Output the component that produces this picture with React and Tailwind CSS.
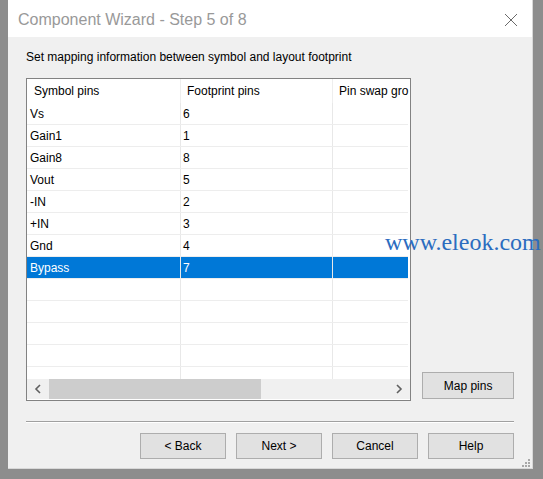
import React from "react";

const pins = [
  ["Vs", "6"],
  ["Gain1", "1"],
  ["Gain8", "8"],
  ["Vout", "5"],
  ["-IN", "2"],
  ["+IN", "3"],
  ["Gnd", "4"],
  ["Bypass", "7"],
  ["", ""],
  ["", ""],
  ["", ""],
  ["", ""],
  ["", ""],
];

function WizardButton({ children, className = "" }) {
  return (
    <button
      type="button"
      className={`h-[26px] bg-[#e1e1e1] border border-[#adadad] text-[12px] text-black ${className}`}
    >
      {children}
    </button>
  );
}

export default function App() {
  return (
    <div
      className="relative w-[543px] h-[479px] bg-[#8d8d8d] pl-[8px] pr-[10px] pb-[10px] overflow-hidden"
      style={{ fontFamily: '"Liberation Sans", Arial, sans-serif' }}
    >
      <div className="h-full flex flex-col bg-[#f0f0f0] border-r border-b border-[#d8d8d8]">
        {/* Title bar */}
        <div className="h-[37px] bg-white flex items-center justify-between pl-[10px] pr-[14px] shrink-0">
          <span className="text-[16px] text-[#999999] pt-[2px]">Component Wizard - Step 5 of 8</span>
          <svg width="14" height="14" viewBox="0 0 14 14" className="mt-[2px]">
            <path d="M1 1 L13 13 M13 1 L1 13" stroke="#6a6a6a" strokeWidth="1" fill="none" />
          </svg>
        </div>

        {/* Body */}
        <div className="flex-1 flex flex-col pl-[18px] pr-[18px]">
          <p className="text-[12px] text-black mt-[13px] leading-[14px]">
            Set mapping information between symbol and layout footprint
          </p>

          <div className="flex items-end gap-[11px] mt-[14px]">
            {/* Pin grid */}
            <div className="w-[386px] h-[323px] border border-[#828282] bg-white flex flex-col">
              <div className="flex-1 overflow-hidden">
                <div className="flex h-[24px] text-[12px] text-black">
                  <div className="w-[154px] pl-[7px] flex items-center border-r border-[#eeeeee]">Symbol pins</div>
                  <div className="w-[152px] pl-[6px] flex items-center border-r border-[#eeeeee]">Footprint pins</div>
                  <div className="flex-1 pl-[6px] flex items-center whitespace-nowrap overflow-hidden">Pin swap gro</div>
                </div>
                {pins.map(([sym, fp], i) => {
                  const selected = sym === "Bypass";
                  return (
                    <div
                      key={i}
                      className={`flex h-[22px] text-[12px] mr-[2px] border-b border-[#ededed] ${
                        selected ? "bg-[#0078d7] text-white" : "text-black"
                      }`}
                    >
                      <div className="w-[154px] pl-[3px] flex items-center border-r border-[#e8e8e8]">{sym}</div>
                      <div className="w-[152px] pl-[2px] flex items-center border-r border-[#e8e8e8]">{fp}</div>
                      <div className="flex-1" />
                    </div>
                  );
                })}
              </div>
              {/* Horizontal scrollbar */}
              <div className="h-[20px] mb-[1px] flex items-center bg-[#f0f0f0] shrink-0">
                <div className="w-[22px] h-full flex items-center justify-center">
                  <svg width="8" height="10" viewBox="0 0 8 10">
                    <path d="M6 1 L2 5 L6 9" stroke="#606060" strokeWidth="1.6" fill="none" />
                  </svg>
                </div>
                <div className="w-[212px] h-full bg-[#cdcdcd]" />
                <div className="flex-1" />
                <div className="w-[22px] h-full flex items-center justify-center">
                  <svg width="8" height="10" viewBox="0 0 8 10">
                    <path d="M2 1 L6 5 L2 9" stroke="#606060" strokeWidth="1.6" fill="none" />
                  </svg>
                </div>
              </div>
            </div>

            <WizardButton className="w-[92px] h-[27px] mb-[2px]">Map pins</WizardButton>
          </div>

          <div className="mt-[20px] border-t border-[#a0a0a0] border-b border-b-white" />

          <div className="flex justify-end gap-[10px] mt-[10px]">
            <WizardButton className="w-[86px]">&lt; Back</WizardButton>
            <WizardButton className="w-[86px]">Next &gt;</WizardButton>
            <WizardButton className="w-[86px]">Cancel</WizardButton>
            <WizardButton className="w-[86px]">Help</WizardButton>
          </div>

          <div className="flex-1 flex items-end justify-end -mr-[16px] pb-[2px]">
            <svg width="8" height="8" viewBox="0 0 8 8">
              <rect x="6" y="0" width="2" height="2" fill="#a8a8a8" />
              <rect x="3" y="3" width="2" height="2" fill="#a8a8a8" />
              <rect x="6" y="3" width="2" height="2" fill="#a8a8a8" />
              <rect x="0" y="6" width="2" height="2" fill="#a8a8a8" />
              <rect x="3" y="6" width="2" height="2" fill="#a8a8a8" />
              <rect x="6" y="6" width="2" height="2" fill="#a8a8a8" />
            </svg>
          </div>
        </div>
      </div>

      {/* Watermark */}
      <span
        className="absolute left-[385px] top-[224px] text-[24px] text-[#2b6cbf] whitespace-nowrap"
        style={{ fontFamily: '"Liberation Serif", "Times New Roman", serif' }}
      >
        www.eleok.com
      </span>
    </div>
  );
}
